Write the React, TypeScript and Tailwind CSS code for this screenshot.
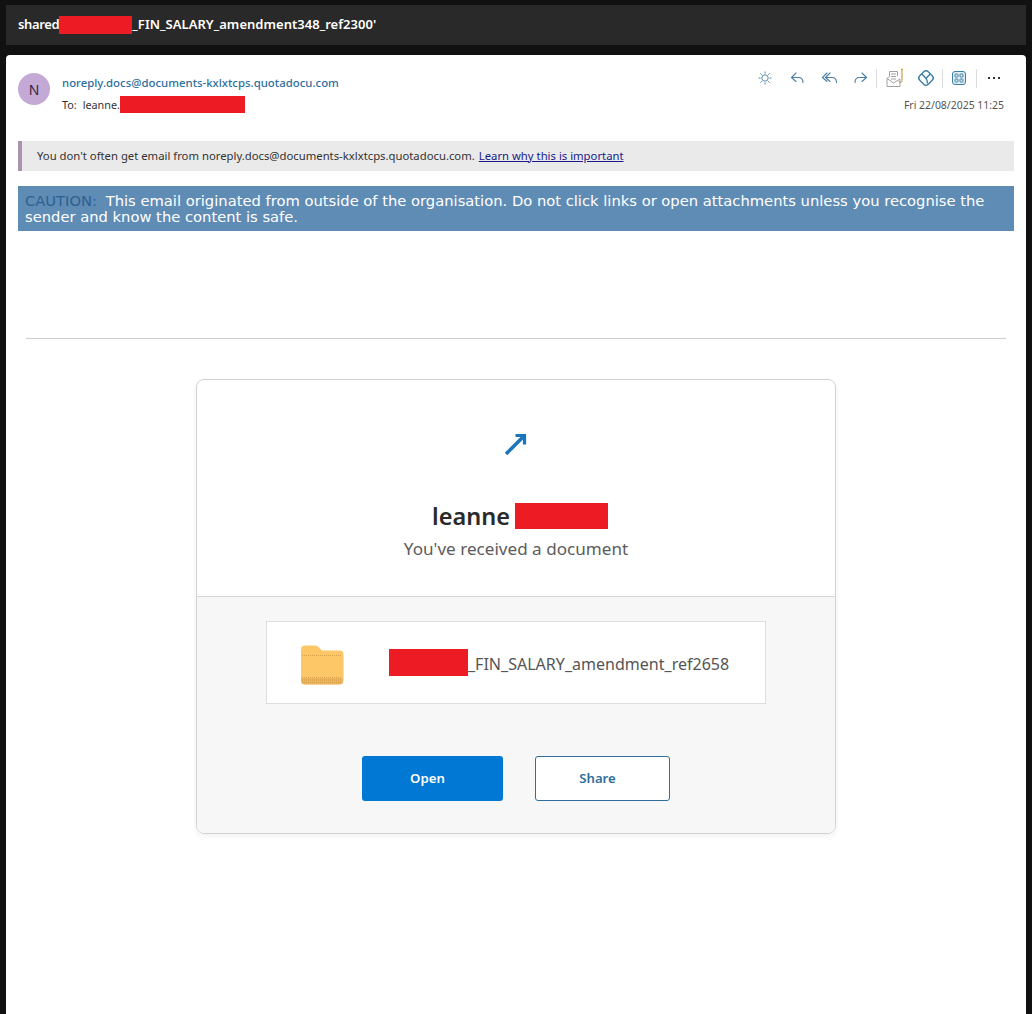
const SANS = "font-['Noto_Sans','Open_Sans',sans-serif]";

function Redact({ className }: { className: string }) {
  return <span className={`inline-block shrink-0 bg-[#ed1c24] ${className}`} />;
}

function Toolbar() {
  const stroke = "#4a7fa3";
  return (
    <div className="flex items-center">
      {/* sun */}
      <svg width="32" height="24" viewBox="0 0 32 24" fill="none" stroke={stroke} strokeWidth="1" className="opacity-90">
        <circle cx="17" cy="12" r="3.2" />
        <path d="M17 5.500v2M17 16.500v2M10.500 12h2M21.500 12h2M12.400 7.400l1.400 1.400M20.200 15.200l1.400 1.400M12.400 16.600l1.400-1.400M20.200 8.800l1.400-1.400" />
      </svg>
      {/* reply */}
      <svg width="32" height="24" viewBox="0 0 32 24" fill="none" stroke={stroke} strokeWidth="1.1" strokeLinecap="round" strokeLinejoin="round">
        <path d="M16 7l-4.500 4.500L16 15.500M12 11.500h6.500c3 0 4.500 2 4.500 5" />
      </svg>
      {/* reply all */}
      <svg width="32" height="24" viewBox="0 0 32 24" fill="none" stroke={stroke} strokeWidth="1.1" strokeLinecap="round" strokeLinejoin="round">
        <path d="M15 7l-4.500 4.500L15 15.500M18 7l-4.500 4.500L18 15.500M14 11.500h6c3 0 4.500 2 4.500 5" />
      </svg>
      {/* forward */}
      <svg width="32" height="24" viewBox="0 0 32 24" fill="none" stroke={stroke} strokeWidth="1.1" strokeLinecap="round" strokeLinejoin="round">
        <path d="M18 7l4.500 4.500L18 15.500M22 11.500h-6.500c-3 0-4.500 2-4.500 5" />
      </svg>
      <span className="h-[19px] w-px bg-[#dcdcdc]" />
      {/* phishing report */}
      <svg width="34" height="24" viewBox="0 0 34 24" fill="none" stroke="#a0a0a0" strokeWidth="1">
        <path d="M10 12.500l2.500-2V5.500h8V10M10 12.500V20.500h13V13M10 12.500l6.500 4.500 6.500-4" />
        <path d="M14 8h5M14 10.500h5M14 13h5" />
        <path d="M25 4.500v10c0 2.500-3 2.500-3 .5" stroke="#b8893a" />
        <circle cx="25" cy="3.500" r="1.100" fill="#e0a030" stroke="none" />
      </svg>
      {/* insights diamond */}
      <svg width="30" height="24" viewBox="0 0 30 24" fill="none" stroke="#3d7ea6" strokeWidth="1.400" strokeLinejoin="round">
        <rect x="9" y="6" width="12" height="12" rx="3.200" transform="rotate(45 15 12)" />
        <path d="M10.500 7.800c1.500 1.200 3 3 4.500 4.700 1 1 1.500 2.500 1.500 5" />
        <path d="M15 12.500c1.500-1.800 3-3.500 4.500-4.800" />
      </svg>
      <span className="mx-[1px] h-[19px] w-px bg-[#dcdcdc]" />
      {/* apps */}
      <svg width="32" height="24" viewBox="0 0 32 24" fill="none" stroke="#3d7ea6" strokeWidth="1">
        <rect x="8.500" y="5.500" width="13" height="13" rx="2.500" fill="#e3eef4" />
        <rect x="11" y="8" width="3" height="3" rx=".6" />
        <rect x="16" y="8" width="3" height="3" rx=".6" />
        <rect x="11" y="13" width="3" height="3" rx=".6" />
        <rect x="16" y="13" width="3" height="3" rx=".6" />
      </svg>
      <span className="h-[19px] w-px bg-[#dcdcdc]" />
      {/* more */}
      <span className="ml-[11px] mr-[26px] flex gap-[2.500px]">
        <i className="h-[2px] w-[2.500px] bg-[#333]" />
        <i className="h-[2px] w-[2.500px] bg-[#333]" />
        <i className="h-[2px] w-[2.500px] bg-[#333]" />
      </span>
    </div>
  );
}

function Folder() {
  return (
    <svg width="44" height="40" viewBox="0 0 44 40" className="mt-[5px] shrink-0">
      <path d="M1 4C1 1.800 2.500 .5 5 .5h10c2 0 3 .8 4.500 2.500l2.500 2.500h18c2 0 3.500 1.500 3.500 3.500v26.500c0 2.500-1.500 4-4 4H5c-2.500 0-4-1.500-4-4z" fill="#fdc768" />
      <path d="M2 10.500h40" stroke="#d9a24a" strokeWidth="1" strokeDasharray="1 1" />
      <path d="M1 33h42v3c0 2.500-1.500 3.500-4 3.500H5c-2.500 0-4-1-4-3.500z" fill="#e5ae58" opacity=".7" />
      <path d="M2 32.500h40M2 35h40M2 37.500h40" stroke="#c99540" strokeWidth="1" strokeDasharray="1 1" opacity=".7" />
    </svg>
  );
}

export default function App() {
  return (
    <div className={`flex h-[1014px] flex-col gap-[10px] overflow-hidden bg-[#111111] px-[6px] pt-[5px] ${SANS}`}>
      <div className="flex h-[40px] shrink-0 items-center bg-[#292929] pl-[12px] text-[13px] font-semibold text-white">
        <span className="tracking-[-0.35px]">shared</span>
        <Redact className="h-[18px] w-[73px]" />
        <span className="tracking-[0.03px]">_FIN_SALARY_amendment348_ref2300'</span>
      </div>

      <div className="flex-1 rounded-t-[4px] bg-white px-[12px] pt-[18px]">
        <div className="flex h-[68px] items-start">
          <div className="flex h-[32px] w-[32px] items-center justify-center rounded-full bg-[#c4a9d6] text-[14px] text-[#33263d]">
            N
          </div>
          <div className="ml-[12px] flex-1">
            <div className="text-[11.400px] leading-[20px] font-medium text-[#2f6f9b]">
              noreply.docs@documents-kxlxtcps.quotadocu.com
            </div>
            <div className="mt-[3px] flex items-center text-[10.800px] leading-[17px] text-[#333]">
              <span>To:</span>
              <span className="ml-[6px]">leanne.</span>
              <Redact className="h-[17px] w-[125px]" />
            </div>
          </div>
          <div className="mr-[-12px] flex flex-col items-end">
            <div className="-mt-[7px]">
              <Toolbar />
            </div>
            <div className="mt-[7px] mr-[22px] text-[10.450px] leading-[16px] text-[#555]">Fri 22/08/2025 11:25</div>
          </div>
        </div>

        <div className="flex h-[30px] items-center border-l-[4px] border-[#ab93ad] bg-[#eaeaea] pl-[15px] text-[11.300px] text-[#333]">
          You don't often get email from noreply.docs@documents-kxlxtcps.quotadocu.com.
          <a className="ml-[4px] text-[#1a1a8c] underline">Learn why this is important</a>
        </div>

        <div className="mt-[15px] h-[45px] bg-[#5f8cb5] px-[7px] pt-[7px] font-['DejaVu_Sans',sans-serif] text-[14.720px] leading-[16px] text-white">
          <span className="mr-[4px] text-[#2f5f8f]">CAUTION:</span> This email originated from outside of the organisation. Do not click links or open attachments unless you recognise the sender and know the content is safe.
        </div>

        <hr className="mx-[8px] mt-[107px] border-[#cccccc]" />

        <div className="mx-auto mt-[40px] w-[640px] overflow-hidden rounded-[8px] border border-[#d2d2d2] shadow-[0_2px_6px_rgba(0,0,0,0.06)]">
          <div className="flex h-[216px] flex-col items-center">
            <svg width="26" height="26" viewBox="0 0 26 26" fill="none" stroke="#1b75bc" className="mt-[51px] shrink-0">
              <path d="M3 23L20.500 5.500" strokeWidth="3.600" />
              <path d="M12.500 4.500h9v9" strokeWidth="3.200" />
            </svg>
            <div className="mt-[46px] flex h-[26px] items-center pl-[8px] text-[23.500px] font-semibold text-[#2a2a2a]">
              <span className="pt-[1px]">leanne</span>
              <Redact className="ml-[5px] h-[26px] w-[93px]" />
            </div>
            <div className="mt-[7px] text-[17.100px] leading-[26px] text-[#5c5c5c]">You've received a document</div>
          </div>

          <div className="flex h-[237px] flex-col items-center border-t border-[#d8d8d8] bg-[#f7f7f7] pt-[24px]">
            <div className="flex h-[83px] w-[500px] items-center border border-[#dddddd] bg-white pl-[33px]">
              <Folder />
              <div className="ml-[45px] flex items-center text-[16.050px] text-[#555]">
                <Redact className="-mt-[1px] h-[27px] w-[79px]" />
                <span className="mt-[4px]">_FIN_SALARY_amendment_ref2658</span>
              </div>
            </div>
            <div className="mt-[52px] flex gap-[32px]">
              <button className="h-[45px] w-[141px] rounded-[3px] bg-[#0078d4] pt-[1px] pr-[10px] text-[13.200px] font-semibold text-white">
                Open
              </button>
              <button className="h-[45px] w-[135px] rounded-[3px] border border-[#2f6f9b] bg-white pt-[1px] pr-[10px] text-[13.200px] font-semibold text-[#2f6f9b]">
                Share
              </button>
            </div>
          </div>
        </div>
      </div>
    </div>
  );
}
